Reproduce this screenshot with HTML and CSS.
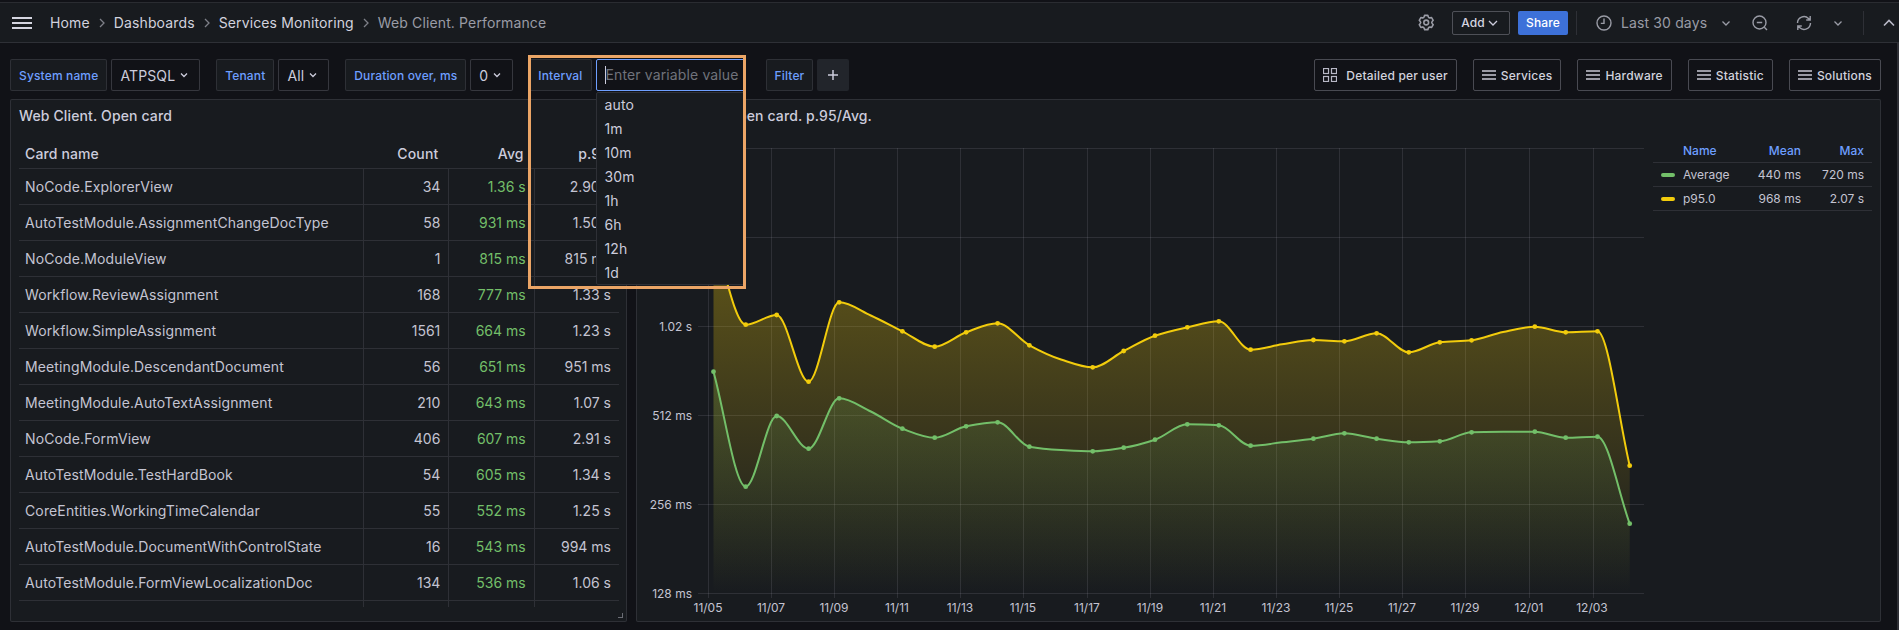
FILE: index.html
```
<!DOCTYPE html>
<html lang="en">
<head>
<meta charset="utf-8">
<title>Web Client. Performance</title>
<link rel="stylesheet" href="styles.css">
</head>
<body>
<div class="app">
  <header class="nav">
    <svg class="burger" viewBox="0 0 20 12"><path d="M0 1h20M0 6h20M0 11h20"/></svg>
    <nav class="crumbs">
      <a>Home</a><svg class="crumb-sep" viewBox="0 0 16 16"><path d="M6 4l4 4-4 4"/></svg>
      <a>Dashboards</a><svg class="crumb-sep" viewBox="0 0 16 16"><path d="M6 4l4 4-4 4"/></svg>
      <a>Services Monitoring</a><svg class="crumb-sep" viewBox="0 0 16 16"><path d="M6 4l4 4-4 4"/></svg>
      <span class="crumb-current">Web Client. Performance</span>
    </nav>
    <div class="nav-tools">
      <svg class="gear" viewBox="0 0 24 24"><path d="M19.9,12.66a1,1,0,0,1,0-1.32L21.18,9.9a1,1,0,0,0,.12-1.17l-2-3.46a1,1,0,0,0-1.07-.48l-1.88.38a1,1,0,0,1-1.15-.66l-.61-1.83A1,1,0,0,0,13.64,2h-4a1,1,0,0,0-1,.68L8.08,4.51a1,1,0,0,1-1.15.66L5,4.79A1,1,0,0,0,4,5.27L2,8.73A1,1,0,0,0,2.1,9.9l1.27,1.44a1,1,0,0,1,0,1.32L2.1,14.1A1,1,0,0,0,2,15.27l2,3.46a1,1,0,0,0,1.07.48l1.88-.38a1,1,0,0,1,1.15.66l.61,1.83a1,1,0,0,0,1,.68h4a1,1,0,0,0,.95-.68l.61-1.83a1,1,0,0,1,1.15-.66l1.88.38a1,1,0,0,0,1.07-.48l2-3.46a1,1,0,0,0-.12-1.17ZM18.41,14l.8.9-1.28,2.22-1.18-.24a3,3,0,0,0-3.45,2L12.92,20H10.36L10,18.86a3,3,0,0,0-3.45-2l-1.18.24L4.07,14.89l.8-.9a3,3,0,0,0,0-4l-.8-.9L5.35,6.89l1.18.24a3,3,0,0,0,3.45-2L10.36,4h2.56l.38,1.14a3,3,0,0,0,3.45,2l1.18-.24,1.28,2.22-.8.9A3,3,0,0,0,18.41,14ZM11.64,8a4,4,0,1,0,4,4A4,4,0,0,0,11.64,8Zm0,6a2,2,0,1,1,2-2A2,2,0,0,1,11.64,14Z"/></svg>
      <button class="add-btn">Add<svg class="chev" viewBox="0 0 16 16"><path d="M4 6l4 4 4-4"/></svg></button>
      <button class="share-btn">Share</button>
      <span class="nav-sep"></span>
      <svg class="tool-icon clock" viewBox="0 0 16 16"><circle cx="8" cy="8" r="7"/><path d="M8 3.6V8.4H4.8"/></svg>
      <span class="range">Last 30 days</span>
      <svg class="chev range-chev" viewBox="0 0 16 16"><path d="M4.5 6.5L8 10l3.500-3.500"/></svg>
      <svg class="tool-icon zoom-out" viewBox="0 0 16 16"><circle cx="7.500" cy="7.500" r="6.500"/><path d="M4.800 7.500h5.400M12.300 12.300L15 15"/></svg>
      <svg class="tool-icon refresh" viewBox="0 0 16 16"><path d="M14.500 8a6.500 6.500 0 0 1-11 4.600L1.800 11M1.800 15v-4h4M1.500 8a6.500 6.500 0 0 1 11-4.600L14.200 5M14.200 1v4h-4"/></svg>
      <svg class="chev refresh-chev" viewBox="0 0 16 16"><path d="M4.500 6.500L8 10l3.500-3.500"/></svg>
      <span class="nav-sep nav-sep-last"></span>
      <svg class="chev-up" viewBox="0 0 16 16"><path d="M3 10.500L8 5.500l5 5"/></svg>
    </div>
  </header>

  <main class="main">
    <section class="vars">
      <div class="var-group">
        <label class="var-label">System name</label>
        <div class="var-value">ATPSQL<svg class="chev" viewBox="0 0 16 16"><path d="M5 6.500L8 9.500l3-3"/></svg></div>
      </div>
      <div class="var-group">
        <label class="var-label">Tenant</label>
        <div class="var-value">All<svg class="chev" viewBox="0 0 16 16"><path d="M5 6.500L8 9.500l3-3"/></svg></div>
      </div>
      <div class="var-group">
        <label class="var-label">Duration over, ms</label>
        <div class="var-value">0<svg class="chev" viewBox="0 0 16 16"><path d="M5 6.500L8 9.500l3-3"/></svg></div>
      </div>
      <div class="var-group">
        <label class="var-label">Interval</label>
        <div class="var-input-wrap">
          <div class="var-input"><span class="placeholder">Enter variable value</span></div>
          <ul class="var-menu">
            <li>auto</li><li>1m</li><li>10m</li><li>30m</li><li>1h</li><li>6h</li><li>12h</li><li>1d</li>
          </ul>
          <div class="highlight"></div>
        </div>
      </div>
      <div class="var-group filter-group">
        <label class="var-label">Filter</label>
        <button class="plus-btn"><svg viewBox="0 0 16 16"><path d="M8 3v10M3 8h10"/></svg></button>
      </div>
      <div class="links">
        <a class="link-btn"><svg class="grid-icon" viewBox="0 0 14 14"><rect x="0.500" y="0.500" width="5" height="5"/><rect x="8.500" y="0.500" width="5" height="5"/><rect x="0.500" y="8.500" width="5" height="5"/><rect x="8.500" y="8.500" width="5" height="5"/></svg>Detailed per user</a>
        <a class="link-btn"><svg class="bars-icon" viewBox="0 0 14 10"><path d="M0 1h14M0 5h14M0 9h14"/></svg>Services</a>
        <a class="link-btn"><svg class="bars-icon" viewBox="0 0 14 10"><path d="M0 1h14M0 5h14M0 9h14"/></svg>Hardware</a>
        <a class="link-btn"><svg class="bars-icon" viewBox="0 0 14 10"><path d="M0 1h14M0 5h14M0 9h14"/></svg>Statistic</a>
        <a class="link-btn"><svg class="bars-icon" viewBox="0 0 14 10"><path d="M0 1h14M0 5h14M0 9h14"/></svg>Solutions</a>
      </div>
    </section>

    <section class="panels">
      <article class="panel panel-table">
        <h2 class="panel-title">Web Client. Open card</h2>
        <table class="cards">
          <colgroup><col class="c-name"><col class="c-num"><col class="c-num"><col class="c-num"></colgroup>
          <thead><tr><th class="th-name">Card name</th><th>Count</th><th>Avg</th><th>p.95</th></tr></thead>
          <tbody>
            <tr><td>NoCode.ExplorerView</td><td>34</td><td class="ok">1.36 s</td><td>2.90 s</td></tr>
            <tr><td>AutoTestModule.AssignmentChangeDocType</td><td>58</td><td class="ok">931 ms</td><td>1.50 s</td></tr>
            <tr><td>NoCode.ModuleView</td><td>1</td><td class="ok">815 ms</td><td>815 ms</td></tr>
            <tr><td>Workflow.ReviewAssignment</td><td>168</td><td class="ok">777 ms</td><td>1.33 s</td></tr>
            <tr><td>Workflow.SimpleAssignment</td><td>1561</td><td class="ok">664 ms</td><td>1.23 s</td></tr>
            <tr><td>MeetingModule.DescendantDocument</td><td>56</td><td class="ok">651 ms</td><td>951 ms</td></tr>
            <tr><td>MeetingModule.AutoTextAssignment</td><td>210</td><td class="ok">643 ms</td><td>1.07 s</td></tr>
            <tr><td>NoCode.FormView</td><td>406</td><td class="ok">607 ms</td><td>2.91 s</td></tr>
            <tr><td>AutoTestModule.TestHardBook</td><td>54</td><td class="ok">605 ms</td><td>1.34 s</td></tr>
            <tr><td>CoreEntities.WorkingTimeCalendar</td><td>55</td><td class="ok">552 ms</td><td>1.25 s</td></tr>
            <tr><td>AutoTestModule.DocumentWithControlState</td><td>16</td><td class="ok">543 ms</td><td>994 ms</td></tr>
            <tr><td>AutoTestModule.FormViewLocalizationDoc</td><td>134</td><td class="ok">536 ms</td><td>1.06 s</td></tr>
            <tr class="row-tail"><td></td><td></td><td></td><td></td></tr>
          </tbody>
        </table>
        <span class="grip"></span>
      </article>

      <article class="panel panel-chart">
        <h2 class="panel-title">Web Client. Open card. p.95/Avg.</h2>
        <div class="chart-body">
          <svg id="chart" class="chart" viewBox="637 132 1012 489">
            <defs>
              <linearGradient id="fillY" gradientUnits="userSpaceOnUse" x1="0" y1="236" x2="0" y2="593">
                <stop offset="0" stop-color="#f2cc0c" stop-opacity="0.34"/>
                <stop offset="1" stop-color="#f2cc0c" stop-opacity="0"/>
              </linearGradient>
              <linearGradient id="fillG" gradientUnits="userSpaceOnUse" x1="0" y1="372" x2="0" y2="593">
                <stop offset="0" stop-color="#73bf69" stop-opacity="0.17"/>
                <stop offset="1" stop-color="#73bf69" stop-opacity="0"/>
              </linearGradient>
            </defs>
            <path class="grid" d="M698 148.500H1644M698 237.500H1644M698 326.500H1644M698 415.500H1644M698 504.500H1644M698 593.500H1644"/>
            <path class="grid" d="M708.500 148V598M771.500 148V598M834.500 148V598M897.500 148V598M960.500 148V598M1023.500 148V598M1087.500 148V598M1150.500 148V598M1213.500 148V598M1276.500 148V598M1339.500 148V598M1402.500 148V598M1465.500 148V598M1529.500 148V598M1593.500 148V598"/>
            <path id="areaY" fill="url(#fillY)"/>
            <path id="areaG" fill="url(#fillG)"/>
            <path id="lineY" class="line line-y"/>
            <path id="lineG" class="line line-g"/>
            <g id="dotsY" class="dots-y"></g>
            <g id="dotsG" class="dots-g"></g>
            <g class="axis-y">
              <text x="692" y="330.500">1.02 s</text>
              <text x="692" y="419.500">512 ms</text>
              <text x="692" y="508.500">256 ms</text>
              <text x="692" y="597.500">128 ms</text>
            </g>
            <g class="axis-x">
              <text x="708" y="611.500">11/05</text><text x="771" y="611.500">11/07</text><text x="834" y="611.500">11/09</text>
              <text x="897" y="611.500">11/11</text><text x="960" y="611.500">11/13</text><text x="1023" y="611.500">11/15</text>
              <text x="1087" y="611.500">11/17</text><text x="1150" y="611.500">11/19</text><text x="1213" y="611.500">11/21</text>
              <text x="1276" y="611.500">11/23</text><text x="1339" y="611.500">11/25</text><text x="1402" y="611.500">11/27</text>
              <text x="1465" y="611.500">11/29</text><text x="1529" y="611.500">12/01</text><text x="1592" y="611.500">12/03</text>
            </g>
          </svg>
          <table class="legend">
            <thead><tr><th class="lg-name" colspan="2">Name</th><th>Mean</th><th>Max</th></tr></thead>
            <tbody>
              <tr><td class="lg-swatch"><i class="swatch swatch-g"></i></td><td class="lg-label">Average</td><td>440 ms</td><td>720 ms</td></tr>
              <tr><td class="lg-swatch"><i class="swatch swatch-y"></i></td><td class="lg-label">p95.0</td><td>968 ms</td><td>2.07 s</td></tr>
            </tbody>
          </table>
        </div>
      </article>
    </section>
  </main>
</div>
<script src="chart.js"></script>
</body>
</html>
```
FILE: styles.css
```
* { box-sizing: border-box; }
html, body { margin: 0; height: 100%; }
body {
  background: #111217;
  color: #ccccdc;
  font-family: Inter, "Liberation Sans", sans-serif;
  font-size: 14px;
  letter-spacing: .13px;
  overflow: hidden;
}
svg { display: block; flex: none; }
button { font-family: inherit; letter-spacing: inherit; }
.app { height: 630px; display: flex; flex-direction: column; }

/* top bar */
.nav {
  height: 41px;
  flex: none;
  margin-top: 2px;
  display: flex;
  align-items: center;
  padding: 0 2px 0 12px;
  background: #181b1f;
  border-top: 1px solid #2a2c31;
  border-bottom: 1px solid #2e3036;
}
.burger { width: 20px; height: 12px; fill: none; stroke: #d5d5e0; stroke-width: 2; }
.crumbs { display: flex; align-items: center; margin-left: 18px; }
.crumbs a { color: #d2d2de; }
.crumb-sep { width: 16px; height: 16px; margin: 0 4px; fill: none; stroke: #7e8088; stroke-width: 1.300; }
.crumb-current { color: #9a9ca6; }
.nav-tools { margin-left: auto; display: flex; align-items: center; }
.gear { width: 19px; height: 19px; fill: #9a9ca6; margin-right: 16px; }
.chev { width: 16px; height: 16px; fill: none; stroke: #ccccdc; stroke-width: 1.300; }
.add-btn {
  width: 58px; height: 24px; margin-right: 8px;
  display: flex; align-items: center; justify-content: center;
  background: transparent; color: #d5d5e0;
  border: 1px solid rgba(204,204,220,.3); border-radius: 2px;
  font-size: 12px; font-weight: 500; padding: 0;
}
.share-btn {
  width: 50px; height: 24px; margin-right: 8px;
  background: #3d71d9; color: #fff; border: 0; border-radius: 2px;
  font-size: 12px; font-weight: 500; padding: 0;
}
.nav-sep { width: 1px; height: 24px; background: #2e3036; margin-right: 19px; }
.tool-icon { width: 16px; height: 16px; fill: none; stroke: #9a9ca6; stroke-width: 1.400; }
.clock { margin-right: 9px; }
.range { color: #9a9ca6; width: 87px; white-space: nowrap; }
.range-chev { stroke: #9a9ca6; margin-left: 10px; }
.zoom-out { margin-left: 18px; }
.refresh { margin-left: 28px; }
.refresh-chev { stroke: #9a9ca6; margin-left: 18px; }
.nav-sep-last { margin: 0 0 0 17px; }
.chev-up { width: 16px; height: 16px; margin-left: 17px; fill: none; stroke: #b8b8c6; stroke-width: 1.600; }

/* main */
.main {
  flex: 1; min-height: 0;
  display: flex; flex-direction: column;
  padding: 16px 16px 8px 10px;
  border-right: 2px solid #2f3036;
}

/* variables row */
.vars { display: flex; gap: 16px; height: 32px; flex: none; position: relative; z-index: 3; }
.var-group { display: flex; gap: 4px; }
.var-label {
  display: flex; align-items: center;
  height: 32px; padding: 0 8px;
  background: #181b1f;
  border: 1px solid rgba(204,204,220,.12);
  border-radius: 2px;
  color: #6e9fff; font-size: 12px; font-weight: 500;
  letter-spacing: .15px;
  white-space: nowrap;
}
.var-value {
  display: flex; align-items: center;
  height: 32px; padding: 0 7px 0 8px;
  background: #111217;
  border: 1px solid rgba(204,204,220,.2);
  border-radius: 2px;
  color: #ccccdc;
}
.var-value .chev { margin-left: 1px; }
.var-input-wrap { position: relative; width: 150px; }
.var-input {
  height: 32px; display: flex; align-items: center;
  padding-left: 8px;
  background: #111217;
  border: 1px solid #6e9fff;
  border-radius: 2px;
  white-space: nowrap;
}
.placeholder { color: #70727b; border-left: 1px solid #ccccdc; line-height: 18px; }
.var-menu {
  position: absolute; top: 33px; left: 0; width: 150px; height: 193px;
  margin: 0; padding: 0; list-style: none; overflow: hidden;
  background: #181b1f;
  border: 1px solid #2e3036; border-radius: 2px;
}
.var-menu li { height: 24px; line-height: 24px; padding-left: 8px; color: #ccccdc; }
.highlight {
  position: absolute; top: -4px; left: -68px; width: 218px; height: 234px;
  border: 3px solid #eba566;
  pointer-events: none;
}
.filter-group { margin-left: 4px; }
.plus-btn {
  width: 32px; height: 32px; padding: 0;
  display: flex; align-items: center; justify-content: center;
  background: #22252b; border: 0; border-radius: 2px;
}
.plus-btn svg { width: 16px; height: 16px; fill: none; stroke: #ccccdc; stroke-width: 1.500; }
.links { margin-left: auto; display: flex; gap: 16px; }
.link-btn {
  display: flex; align-items: center; gap: 5px;
  height: 32px; padding: 0 8px;
  border: 1px solid rgba(204,204,220,.3); border-radius: 2px;
  color: #d2d2de; font-size: 12px; font-weight: 500;
  letter-spacing: .2px;
  white-space: nowrap;
}
.grid-icon { width: 14px; height: 14px; margin-right: 4px; fill: none; stroke: #b8b8c6; stroke-width: 1.200; }
.bars-icon { width: 14px; height: 10px; fill: none; stroke: #c8c8d4; stroke-width: 1.400; }

/* panels */
.panels {
  flex: 1; min-height: 0; margin-top: 8px;
  display: grid; grid-template-columns: 617px 1fr; gap: 9px;
}
.panel {
  position: relative; min-width: 0;
  background: #181b1f;
  border: 1px solid rgba(204,204,220,.12);
  border-radius: 2px;
}
.panel-title {
  margin: 0; height: 32px; padding: 8px 0 0 8px;
  font-size: 14px; font-weight: 500; line-height: 16px; color: #ccccdc;
  white-space: nowrap;
}

/* table */
.cards {
  table-layout: fixed; width: 600px;
  margin: 8px 0 0 8px;
  border-collapse: separate; border-spacing: 0;
}
.c-name { width: 344px; }
.c-num { width: 85.33px; }
.cards th {
  height: 29px; padding: 0 10px 1px 0;
  text-align: right; font-weight: 500; color: #ccccdc;
  border-bottom: 1px solid rgba(204,204,220,.12);
}
.cards th.th-name { text-align: left; padding-left: 6px; }
.cards td {
  height: 36px; padding: 0 8px 0 0;
  text-align: right; color: #c4c4d2;
  border-bottom: 1px solid rgba(204,204,220,.12);
  border-left: 1px solid rgba(204,204,220,.12);
  white-space: nowrap;
  letter-spacing: 0;
}
.cards td:first-child { text-align: left; padding-left: 6px; border-left: 0; letter-spacing: .13px; }
.cards td.ok { color: #73bf69; }
.cards .row-tail td { height: 6px; border-bottom: 0; }
.grip {
  position: absolute; right: 3px; bottom: 3px; width: 5px; height: 5px;
  border-right: 1px solid #6b6d75; border-bottom: 1px solid #6b6d75;
}

/* chart */
.chart-body { display: flex; }
.chart { width: 1012px; height: 489px; }
.grid { fill: none; stroke: rgba(204,204,220,.12); stroke-width: 1; }
.line { fill: none; stroke-width: 2; }
.line-y { stroke: #f2cc0c; }
.line-g { stroke: #73bf69; }
.dots-y { fill: #f2cc0c; }
.dots-g { fill: #73bf69; }
.axis-y text, .axis-x text { font-size: 12px; fill: #c4c4d2; letter-spacing: 0; }
.axis-y { text-anchor: end; }
.axis-x { text-anchor: middle; }
.legend {
  width: 219px; height: 0; margin: 6px 0 0 4px;
  border-collapse: separate; border-spacing: 0;
  font-size: 12px; align-self: flex-start;
  letter-spacing: 0;
}
.legend th {
  height: 25px; padding: 0;
  text-align: right; font-weight: 500; color: #6e9fff;
  border-bottom: 1px solid rgba(204,204,220,.12);
}
.legend th.lg-name { text-align: left; padding-left: 30px; }
.legend td {
  height: 24px; padding: 0;
  text-align: right; color: #c4c4d2;
  border-bottom: 1px solid rgba(204,204,220,.12);
  white-space: nowrap;
}
.legend th:last-child, .legend td:last-child { width: 71px; padding-right: 8px; }
.legend td.lg-swatch { width: 30px; padding: 0 0 0 8px; }
.legend td.lg-label { text-align: left; }
.swatch { display: block; width: 14px; height: 4px; border-radius: 2px; }
.swatch-g { background: #73bf69; }
.swatch-y { background: #f2cc0c; }
```
FILE: chart.js
```
(function () {
  // [x, yellow y, green y, has marker]
  var rows = [
    [713.5, 236, 371.7, 1], [745.7, 324.7, 486.7, 1], [776.7, 315, 416, 1], [808.6, 381.7, 448.7, 1],
    [839.2, 302.3, 398.3, 1], [870.8, 315.5, 411.5, 0], [902.4, 331.3, 428.7, 1], [934.7, 346.7, 437.7, 1],
    [966.1, 332.3, 426.3, 1], [997.6, 323.3, 422.3, 1], [1029.4, 345.3, 446.7, 1], [1061, 359.5, 450, 0],
    [1092.7, 367.3, 451.3, 1], [1123.7, 351, 447.7, 1], [1155, 335.7, 439.7, 1], [1187.3, 327.3, 424.3, 1],
    [1218.8, 321.3, 425.3, 1], [1250.6, 349.7, 445.7, 1], [1282, 344.3, 442.3, 0], [1313.4, 340, 438.7, 1],
    [1344.4, 341.3, 433.3, 1], [1376.6, 333.3, 438.7, 1], [1408.8, 352.3, 442.3, 1], [1439.8, 342.3, 441.3, 1],
    [1471.6, 340.3, 432.3, 1], [1503, 332, 431.8, 0], [1534.8, 326.7, 431.7, 1], [1565.7, 332.3, 437.7, 1],
    [1597.5, 331.3, 436.7, 1], [1629.7, 465.7, 523.7, 1]
  ];
  var NS = 'http://www.w3.org/2000/svg';
  var FLOOR = 593;

  function spline(col) {
    var n = rows.length, i, d = [], m = [];
    for (i = 0; i < n - 1; i++) {
      d[i] = (rows[i + 1][col] - rows[i][col]) / (rows[i + 1][0] - rows[i][0]);
    }
    m[0] = d[0];
    m[n - 1] = d[n - 2];
    for (i = 1; i < n - 1; i++) {
      if (d[i - 1] * d[i] <= 0) { m[i] = 0; continue; }
      var h0 = rows[i][0] - rows[i - 1][0], h1 = rows[i + 1][0] - rows[i][0];
      m[i] = 3 * (h0 + h1) / ((2 * h1 + h0) / d[i - 1] + (h1 + 2 * h0) / d[i]);
    }
    var p = 'M' + rows[0][0] + ' ' + rows[0][col];
    for (i = 0; i < n - 1; i++) {
      var h = (rows[i + 1][0] - rows[i][0]) / 3;
      p += 'C' + (rows[i][0] + h).toFixed(1) + ' ' + (rows[i][col] + m[i] * h).toFixed(1) + ' ' +
        (rows[i + 1][0] - h).toFixed(1) + ' ' + (rows[i + 1][col] - m[i + 1] * h).toFixed(1) + ' ' +
        rows[i + 1][0] + ' ' + rows[i + 1][col];
    }
    return p;
  }

  function draw(col, lineId, areaId, dotsId) {
    var p = spline(col);
    document.getElementById(lineId).setAttribute('d', p);
    document.getElementById(areaId).setAttribute('d',
      p + 'L' + rows[rows.length - 1][0] + ' ' + FLOOR + 'L' + rows[0][0] + ' ' + FLOOR + 'Z');
    var g = document.getElementById(dotsId);
    rows.forEach(function (r) {
      if (!r[3]) return;
      var c = document.createElementNS(NS, 'circle');
      c.setAttribute('cx', r[0]);
      c.setAttribute('cy', r[col]);
      c.setAttribute('r', 2.4);
      g.appendChild(c);
    });
  }

  draw(1, 'lineY', 'areaY', 'dotsY');
  draw(2, 'lineG', 'areaG', 'dotsG');
})();
```
